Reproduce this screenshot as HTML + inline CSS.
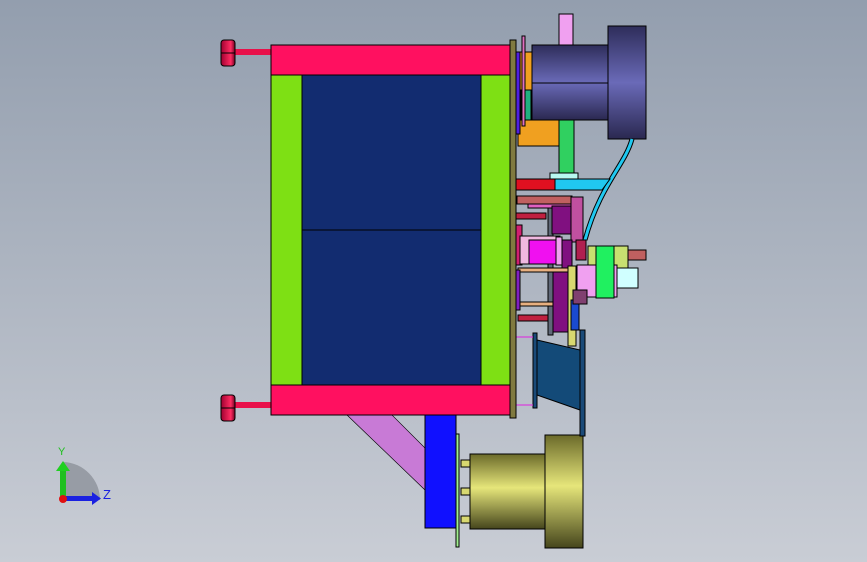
<!DOCTYPE html>
<html><head><style>
html,body{margin:0;padding:0;width:867px;height:562px;overflow:hidden}
body{background:linear-gradient(#939eae,#c9cdd5)}
</style></head><body>
<svg width="867" height="562" xmlns="http://www.w3.org/2000/svg" style="position:absolute;left:0;top:0">
<defs>
<linearGradient id="mot" x1="0" y1="0" x2="0" y2="1"><stop offset="0" stop-color="#2e2d5a"/><stop offset=".5" stop-color="#6a6ab8"/><stop offset="1" stop-color="#2a2850"/></linearGradient>
<linearGradient id="yel" x1="0" y1="0" x2="0" y2="1"><stop offset="0" stop-color="#6b6a2a"/><stop offset=".45" stop-color="#e6e67a"/><stop offset="1" stop-color="#45451c"/></linearGradient>
<linearGradient id="knob" x1="0" y1="0" x2="1" y2="0"><stop offset="0" stop-color="#a00030"/><stop offset=".7" stop-color="#ff2c62"/><stop offset="1" stop-color="#700020"/></linearGradient>
</defs>
<g stroke="#000" stroke-width="1">
<rect x="235" y="49" width="36" height="6" fill="#e8104a" stroke="none"/>
<rect x="221" y="40" width="14" height="26" rx="3" fill="url(#knob)"/>
<line x1="221" y1="53" x2="235" y2="53"/>
<rect x="235" y="402" width="36" height="6" fill="#e8104a" stroke="none"/>
<rect x="221" y="395" width="14" height="26" rx="3" fill="url(#knob)"/>
<line x1="221" y1="408" x2="235" y2="408"/>
<polygon points="347,415 392,415 425,448 425,490" fill="#c87ad6" stroke-width=".6"/>
<rect x="271" y="45" width="240" height="30" fill="#ff1060"/>
<rect x="271" y="385" width="240" height="30" fill="#ff1060"/>
<rect x="271" y="75" width="31" height="310" fill="#7ee014"/>
<rect x="481" y="75" width="30" height="310" fill="#7ee014"/>
<rect x="302" y="75" width="179" height="310" fill="#122c70"/>
<line x1="302" y1="230" x2="481" y2="230"/>
<rect x="425" y="415" width="31" height="113" fill="#1010ff"/>
<rect x="456" y="434" width="3" height="113" fill="#a0f090"/>
<rect x="461" y="460" width="9" height="7" fill="#d8d870"/>
<rect x="461" y="488" width="9" height="7" fill="#d8d870"/>
<rect x="461" y="516" width="9" height="7" fill="#d8d870"/>
<rect x="470" y="454" width="75" height="75" fill="url(#yel)"/>
<rect x="545" y="435" width="38" height="113" fill="url(#yel)"/>
<rect x="548" y="200" width="5" height="135" fill="#606878"/>
<rect x="580" y="330" width="5" height="106" fill="#1a4a78"/>
<polygon points="537,340 580,350 580,410 537,395" fill="#134a78"/>
<rect x="533" y="333" width="4" height="75" fill="#1a4a78"/>
<line x1="516" y1="337" x2="533" y2="337" stroke="#e020e0"/>
<line x1="516" y1="405" x2="533" y2="405" stroke="#e020e0"/>
<rect x="559" y="14" width="14" height="33" fill="#f0a0f0"/>
<rect x="518" y="52" width="42" height="94" fill="#f0a020"/>
<rect x="521" y="90" width="10" height="30" fill="#20b080"/>
<rect x="516" y="52" width="4" height="82" fill="#5020e0"/>
<rect x="522" y="36" width="3" height="90" fill="#e070c0"/>
<rect x="559" y="120" width="15" height="57" fill="#30d060"/>
<rect x="532" y="45" width="78" height="75" fill="url(#mot)"/>
<line x1="532" y1="83" x2="646" y2="83"/>
<rect x="608" y="26" width="38" height="113" fill="url(#mot)"/>
<path d="M632,139 C625,165 600,185 585,240" fill="none" stroke="#000" stroke-width="5"/>
<path d="M632,139 C625,165 600,185 585,240" fill="none" stroke="#20c8f0" stroke-width="3"/>
<rect x="550" y="173" width="28" height="7" fill="#b8f8f0"/>
<rect x="516" y="179" width="39" height="11" fill="#e01020"/>
<polygon points="555,179 610,179 602,190 555,190" fill="#20c8f0"/>
<rect x="517" y="196" width="55" height="8" fill="#c06060"/>
<rect x="528" y="204" width="45" height="4" fill="#e060c0"/>
<rect x="516" y="213" width="30" height="6" fill="#c02040"/>
<rect x="552" y="206" width="20" height="28" fill="#801080"/>
<rect x="571" y="197" width="12" height="45" fill="#c050a0"/>
<rect x="516" y="225" width="6" height="40" fill="#d02070"/>
<rect x="520" y="236" width="40" height="28" fill="#f0b8e0"/>
<rect x="529" y="240" width="27" height="24" fill="#f010f0"/>
<rect x="556" y="237" width="6" height="28" fill="#f0a0f0"/>
<rect x="562" y="240" width="10" height="28" fill="#801080"/>
<rect x="518" y="268" width="50" height="4" fill="#e8b080"/>
<rect x="518" y="302" width="50" height="4" fill="#e8b080"/>
<rect x="516" y="270" width="4" height="40" fill="#8020c0"/>
<rect x="518" y="315" width="30" height="6" fill="#c02040"/>
<rect x="553" y="272" width="16" height="60" fill="#801080"/>
<rect x="568" y="266" width="8" height="80" fill="#d8d870"/>
<rect x="571" y="300" width="8" height="30" fill="#1a4ad0"/>
<rect x="588" y="246" width="40" height="25" fill="#c8e070"/>
<rect x="628" y="250" width="18" height="10" fill="#c06060"/>
<rect x="577" y="265" width="40" height="32" fill="#f0a0f0"/>
<rect x="596" y="246" width="18" height="52" fill="#20f060"/>
<rect x="617" y="268" width="21" height="20" fill="#d0ffff"/>
<rect x="573" y="290" width="14" height="14" fill="#804070"/>
<rect x="576" y="240" width="10" height="20" fill="#b02050"/>
<rect x="510" y="40" width="6" height="378" fill="#807a40"/>
</g>
<path d="M63,500 L63,462 A38,38 0 0 1 100,500 Z" fill="#8c919a" opacity=".8"/>
<rect x="60" y="470" width="6" height="30" fill="#20c020"/>
<polygon points="56,471 63,461 70,471" fill="#20d020"/>
<rect x="63" y="496" width="30" height="5" fill="#1a20e0"/>
<polygon points="92,492 101,498.5 92,505" fill="#1a20e0"/>
<circle cx="63" cy="499" r="4" fill="#e01010"/>
<text x="58" y="455" font-family="Liberation Sans,sans-serif" font-size="11" fill="#20c020">Y</text>
<text x="103" y="499" font-family="Liberation Sans,sans-serif" font-size="13" fill="#1a20e0">Z</text>
</svg>
</body></html>
